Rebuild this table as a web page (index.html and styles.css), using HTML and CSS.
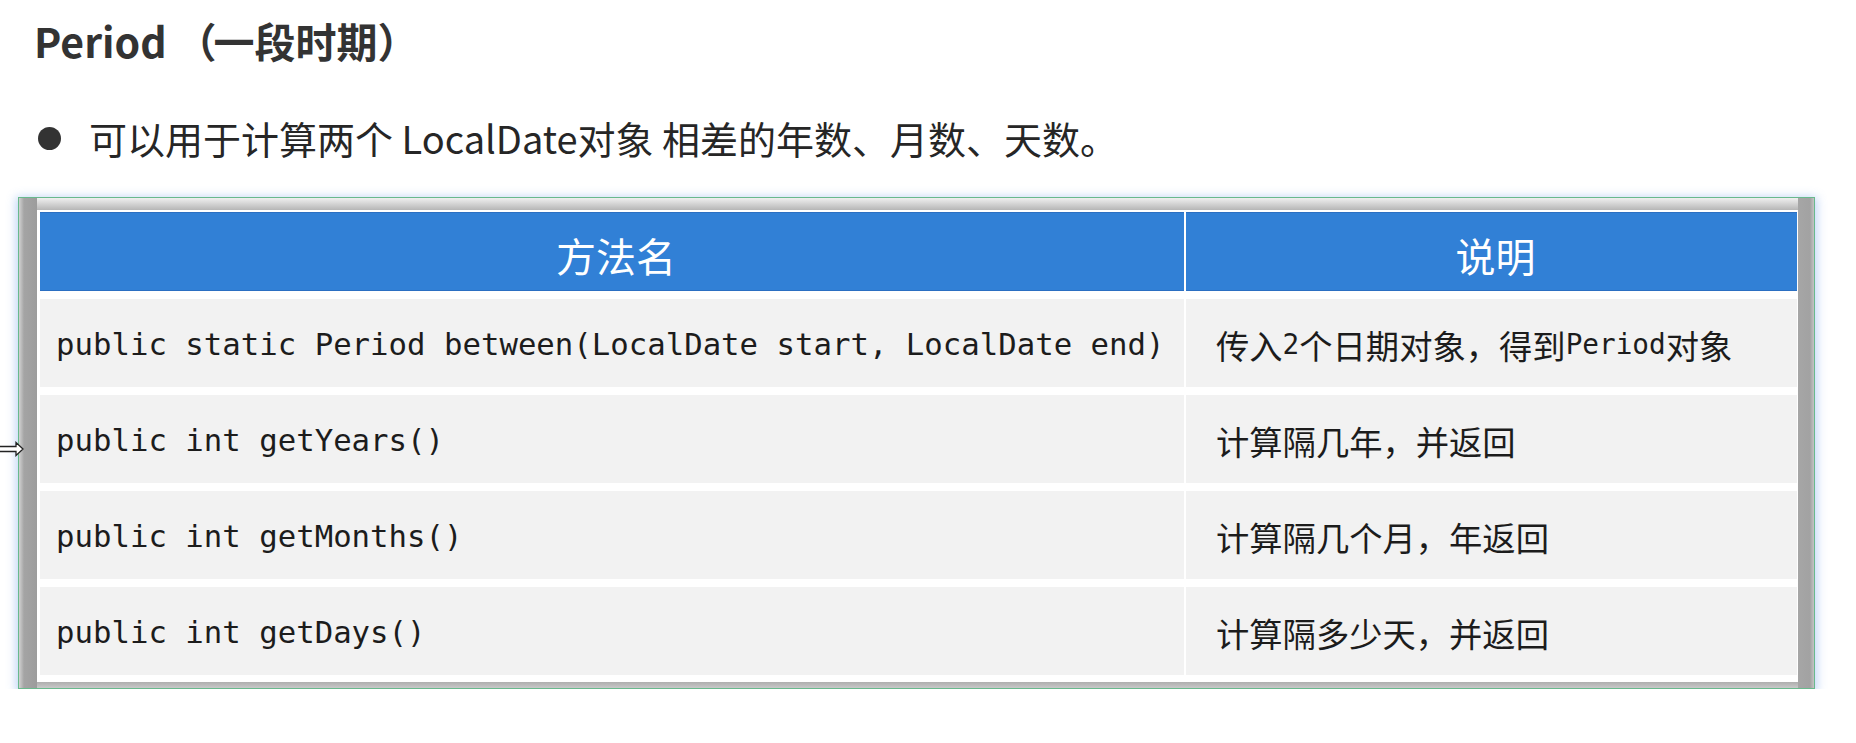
FILE: index.html
```html
<!DOCTYPE html>
<html lang="zh-CN">
<head>
<meta charset="utf-8">
<title>Period</title>
<link rel="stylesheet" href="styles.css">
</head>
<body>
<h1 class="title"><span class="title-en">Period</span><span class="lp">（</span>一段时期<span class="rp">）</span></h1>
<div class="bullet-line"><span class="dot"></span><span class="bullet-text">可以用于计算两个 LocalDate对象 相差的年数、月数、天数。</span></div>
<div class="frame">
  <div class="inner">
    <div class="grid">
      <div class="th">方法名</div>
      <div class="th">说明</div>
      <div class="td code">public static Period between(LocalDate start, LocalDate end)</div>
      <div class="td desc">传入<span class="m">2</span>个日期对象，得到<span class="m">Period</span>对象</div>
      <div class="td code">public int getYears()</div>
      <div class="td desc">计算隔几年，并返回</div>
      <div class="td code">public int getMonths()</div>
      <div class="td desc">计算隔几个月，年返回</div>
      <div class="td code">public int getDays()</div>
      <div class="td desc">计算隔多少天，并返回</div>
    </div>
  </div>
</div>
<svg class="cursor" width="26" height="16" viewBox="0 0 26 16"><polygon points="-10,8 -3,1.5 -3,5.5 16,5.5 16,1.5 23,8 16,14.5 16,10.5 -3,10.5 -3,14.5" fill="#fff" stroke="#222" stroke-width="1.3"/></svg>
</body>
</html>
```

FILE: styles.css
```css
body {
  margin: 0;
  background: #fff;
  font-family: "Noto Sans CJK SC", sans-serif;
  position: relative;
}

.title {
  margin: 0;
  padding: 16px 0 0 34px;
  font-size: 41px;
  line-height: 48px;
  font-weight: 700;
  color: #333;
}

.lp {
  padding-left: 9px;
  margin-right: -3px;
}

.bullet-line {
  display: flex;
  align-items: center;
  height: 48px;
  margin-top: 50px;
}

.dot {
  width: 23px;
  height: 23px;
  border-radius: 50%;
  background: #333;
  margin-left: 38px;
  margin-right: 28px;
  flex: none;
}

.bullet-text {
  font-size: 38px;
  line-height: 48px;
  color: #262626;
  white-space: pre;
}

.frame {
  margin-top: 35px;
  margin-left: 18px;
  width: 1797px;
  box-sizing: border-box;
  border: 1px solid #69b98d;
  padding: 12px 16px 6px 18px;
  background:
    linear-gradient(to right, #d2d2d2 0, #a4a4a4 5px, #9c9c9c 100%) left top / 18px 100% no-repeat,
    linear-gradient(to left, #c4c4c4 0, #a2a2a2 4px, #a6a6a6 100%) right top / 16px 100% no-repeat,
    linear-gradient(to bottom, #f0f0f0, #b6b6b6) top / 100% 12px no-repeat,
    linear-gradient(to top, #c8c8c8, #aeaeae) bottom / 100% 6px no-repeat,
    #aaa;
  box-shadow: 0 2px 9px 2px rgba(110, 160, 235, 0.45);
}

.inner {
  background: #fff;
  padding: 2px 1px 7px 3px;
}

.grid {
  display: grid;
  grid-template-columns: 1144px 611px;
  grid-template-rows: 79px repeat(4, 88px);
  column-gap: 2px;
  row-gap: 8px;
}

.th {
  background: #3180d6;
  color: #fff;
  font-size: 40px;
  display: flex;
  align-items: center;
  justify-content: center;
  padding-top: 6px;
  padding-left: 8px;
  box-sizing: border-box;
  border-top: 1px solid #2b6fc2;
  border-bottom: 1px solid #2b6fc2;
}

.td {
  background: #f2f2f2;
  display: flex;
  align-items: center;
  color: #1c1c1c;
  white-space: pre;
}

.code {
  font-family: "DejaVu Sans Mono", monospace;
  font-size: 30.7px;
  padding-left: 16px;
  padding-top: 3px;
}

.desc {
  font-size: 33.3px;
  padding-left: 30px;
  padding-top: 3px;
}

.m {
  font-family: "DejaVu Sans Mono", monospace;
  font-size: 27.7px;
}

.cursor {
  position: absolute;
  left: 0;
  top: 441px;
}
```
